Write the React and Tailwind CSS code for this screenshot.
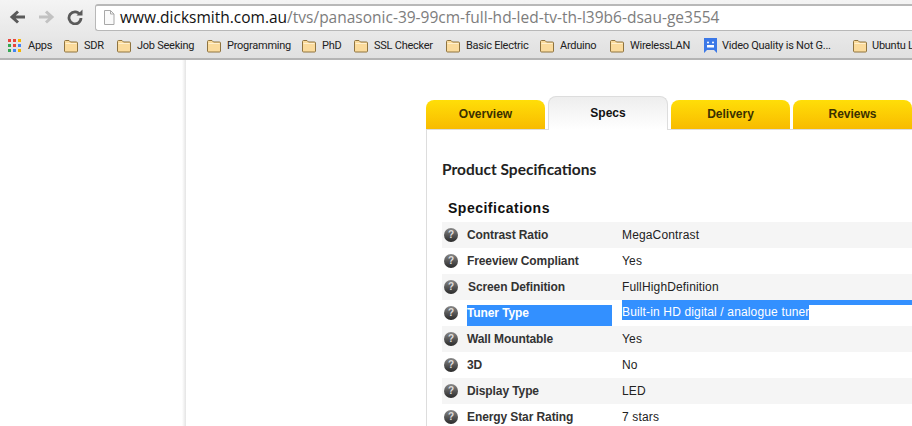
import React from "react";

const bookmarks = [
  { name: "SDR", width: "w-[53px]" },
  { name: "Job Seeking", width: "w-[90px]" },
  { name: "Programming", width: "w-[95px]" },
  { name: "PhD", width: "w-[52px]" },
  { name: "SSL Checker", width: "w-[92px]" },
  { name: "Basic Electric", width: "w-[94px]" },
  { name: "Arduino", width: "w-[70px]" },
  { name: "WirelessLAN", width: "w-[95px]" },
];

const specs = [
  { label: "Contrast Ratio", value: "MegaContrast" },
  { label: "Freeview Compliant", value: "Yes" },
  { label: "Screen Definition", value: "FullHighDefinition", nudge: true },
  { label: "Tuner Type", value: "Built-in HD digital / analogue tuner", selected: true },
  { label: "Wall Mountable", value: "Yes" },
  { label: "3D", value: "No" },
  { label: "Display Type", value: "LED" },
  { label: "Energy Star Rating", value: "7 stars" },
];

const Folder = () => (
  <svg width="16" height="14" viewBox="0 0 16 14" className="shrink-0">
    <path
      d="M1.5 12V2.5C1.5 1.8 2 1.5 2.5 1.5H6L7.5 3H13.5C14.2 3 14.5 3.4 14.5 4V12C14.5 12.6 14.2 13 13.5 13H2.5C2 13 1.5 12.6 1.5 12Z"
      fill="#fbdb9c"
      stroke="#8f7440"
    />
    <path d="M2.5 4.5H13.5" stroke="#fff0cf" />
  </svg>
);

const AppsIcon = () => (
  <svg width="14" height="14" viewBox="0 0 14 14" className="shrink-0">
    <rect x="0" y="0" width="3" height="3" fill="#e8453c" />
    <rect x="5" y="0" width="3" height="3" fill="#e8453c" />
    <rect x="10" y="0" width="3" height="3" fill="#f4b400" />
    <rect x="0" y="5" width="3" height="3" fill="#34a853" />
    <rect x="5" y="5" width="3" height="3" fill="#e8453c" />
    <rect x="10" y="5" width="3" height="3" fill="#4285f4" />
    <rect x="0" y="10" width="3" height="3" fill="#34a853" />
    <rect x="5" y="10" width="3" height="3" fill="#4285f4" />
    <rect x="10" y="10" width="3" height="3" fill="#f4b400" />
  </svg>
);

const FeedbackIcon = () => (
  <svg width="13" height="16" viewBox="0 0 13 16" className="shrink-0">
    <path d="M0 0H13V15L10 12H3L0 15Z" fill="#3b78e7" />
    <circle cx="4" cy="4.5" r="1" fill="#fff" />
    <circle cx="9" cy="4.5" r="1" fill="#fff" />
    <rect x="3" y="7" width="7" height="2.5" fill="#fff" />
  </svg>
);

const Tab = ({ label, active, width }) =>
  active ? (
    <div
      className={`${width} h-[34px] -mb-px relative z-10 flex items-center justify-center rounded-t-lg border border-b-0 border-[#dddddd] bg-gradient-to-b from-[#eeeeee] to-[#ffffff] text-[12px] font-bold text-[#111111] pb-[1px]`}
    >
      {label}
    </div>
  ) : (
    <div
      className={`${width} h-[29px] flex items-center justify-center rounded-t-lg bg-gradient-to-b from-[#ffde08] to-[#f8bb00] text-[12px] font-bold text-[#3a3000] pb-[2px]`}
    >
      {label}
    </div>
  );

const SpecRow = ({ spec, shaded }) => (
  <div className={`h-[26px] flex items-center text-[12px] ${shaded ? "bg-[#f5f5f5]" : "bg-white"}`}>
    <div className="w-[25px] pl-[2px] shrink-0">
      <div className="w-[14px] h-[14px] rounded-full bg-gradient-to-b from-[#8a8a8a] to-[#2a2a2a] text-[#dddddd] text-[10px] font-bold leading-[14px] text-center">
        ?
      </div>
    </div>
    {spec.selected ? (
      <>
        <div className="w-[145px] h-[26px] pt-[5px] shrink-0">
          <div className="h-[21px] leading-[16px] bg-[#3390ff] text-white font-bold tracking-[-0.1px]">{spec.label}</div>
        </div>
        <div className="ml-[10px] flex-1 h-[26px] flex flex-col">
          <div className="h-[5px] bg-[#3390ff]" />
          <div className="h-[21px]">
            <div className="w-[187px] h-[15px] leading-[15px] bg-[#3390ff] text-white whitespace-nowrap tracking-[0.15px]">
              {spec.value}
            </div>
          </div>
        </div>
      </>
    ) : (
      <>
        <div className={`w-[155px] shrink-0 font-bold text-[#333333] tracking-[-0.1px] ${spec.nudge ? "pl-[1px]" : ""}`}>
          {spec.label}
        </div>
        <div className="text-[#222222] tracking-[0.15px]">{spec.value}</div>
      </>
    )}
  </div>
);

const App = () => {
  return (
    <div className="w-[912px] h-[426px] overflow-hidden bg-white font-['Liberation_Sans',sans-serif]">
      {/* Browser chrome */}
      <div className="h-[60px] border-b-2 border-[#b4b4b4] bg-gradient-to-b from-[#f4f4f4] to-[#e0e0e0]">
        <div className="h-[33px] flex items-center pt-[1px]">
          <div className="w-[95px] flex items-center shrink-0 pl-[9px] gap-[12px]">
            <svg width="17" height="16" viewBox="0 0 17 16">
              <path d="M16 8H4M9 2.5L3 8L9 13.5" fill="none" stroke="#5a5a5a" strokeWidth="3" />
            </svg>
            <svg width="17" height="16" viewBox="0 0 17 16">
              <path d="M1 8H13M8 2.5L14 8L8 13.5" fill="none" stroke="#c2c2c2" strokeWidth="3" />
            </svg>
            <svg width="16" height="16" viewBox="0 0 16 16">
              <path d="M13 5.5A6 6 0 1 0 14 9" fill="none" stroke="#5a5a5a" strokeWidth="2.8" />
              <path d="M9.5 6.5H15.5V0.5Z" fill="#5a5a5a" />
            </svg>
          </div>
          <div className="flex-1 h-[27px] flex items-center rounded-l-[3px] border border-r-0 border-t-2 border-[#b8b8b8] bg-white pl-[7px] font-['Open_Sans',sans-serif] text-[15.5px] whitespace-nowrap overflow-hidden">
            <svg width="12" height="15" viewBox="0 0 12 15" className="shrink-0 mr-[5px]">
              <path d="M1.5 0.5H7.5L11 4V14.5H1.5Z" fill="#fafafa" stroke="#a8a8a8" />
              <path d="M7.5 0.5V4H11" fill="none" stroke="#a8a8a8" />
            </svg>
            <span className="text-[#111111]">www.dicksmith.com.au</span>
            <span className="text-[#7d7d7d]">/tvs/panasonic-39-99cm-full-hd-led-tv-th-l39b6-dsau-ge3554</span>
          </div>
        </div>
        <div className="h-[25px] flex items-center pl-[8px] font-['Roboto',sans-serif] text-[11px] tracking-[-0.25px] text-[#222222] whitespace-nowrap overflow-hidden">
          <div className="w-[55px] shrink-0 flex items-center gap-[6px]">
            <AppsIcon />
            <span className="pt-[2px]">Apps</span>
          </div>
          {bookmarks.map((b) => (
            <div key={b.name} className={`${b.width} shrink-0 flex items-center gap-[5px]`}>
              <Folder />
              <span className="pt-[2px]">{b.name}</span>
            </div>
          ))}
          <div className="w-[148px] shrink-0 flex items-center gap-[5px]">
            <FeedbackIcon />
            <span className="pt-[2px]">Video Quality is Not G...</span>
          </div>
          <div className="shrink-0 flex items-center gap-[4px]">
            <Folder />
            <span className="pt-[2px]">Ubuntu Linux</span>
          </div>
        </div>
      </div>

      {/* Page */}
      <div className="flex h-[366px]">
        <div className="w-[186px] shrink-0 flex justify-end">
          <div className="w-[4px] bg-gradient-to-r from-[#ffffff] to-[#e4e4e4]" />
        </div>
        <div className="pl-[240px] pt-[36px] flex-1">
          <div className="flex gap-[3px] items-end h-[33px]">
            <Tab label="Overview" width="w-[119px]" />
            <Tab label="Specs" active width="w-[120px]" />
            <Tab label="Delivery" width="w-[119px]" />
            <Tab label="Reviews" width="w-[119px]" />
          </div>
          <div className="border-l border-t border-[#dddddd] pl-[15px] h-[300px]">
            <h1 className="pt-[28px] h-[65px] font-['Lato',sans-serif] text-[15.5px] font-bold text-[#222222] leading-[22px]">
              Product Specifications
            </h1>
            <h2 className="pl-[6px] h-[27px] text-[14px] font-bold tracking-[0.5px] text-[#111111] leading-[27px]">
              Specifications
            </h2>
            <div>
              {specs.map((spec, i) => (
                <SpecRow key={spec.label} spec={spec} shaded={i % 2 === 0} />
              ))}
            </div>
          </div>
        </div>
      </div>
    </div>
  );
};

export default App;
